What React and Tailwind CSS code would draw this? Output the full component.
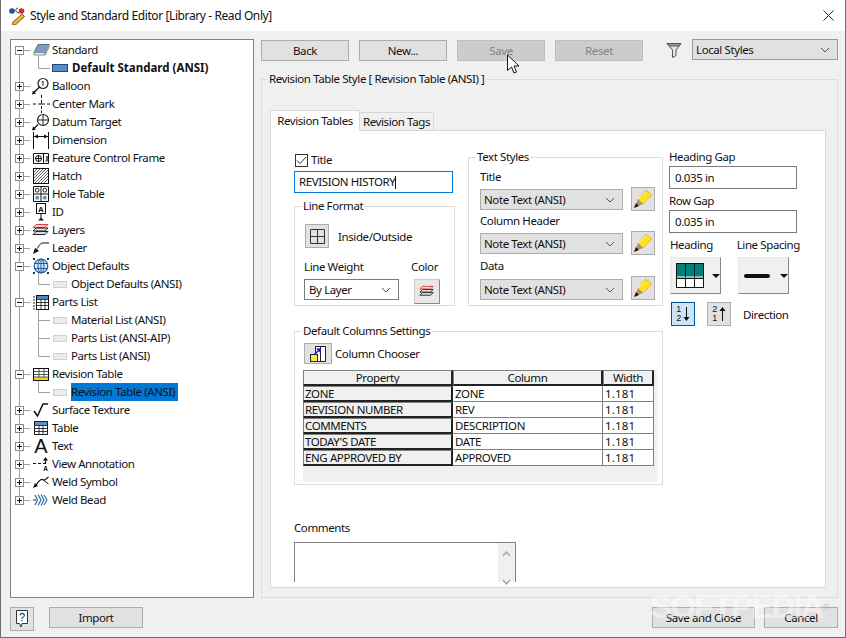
import React from 'react';

const Btn = ({ children, className = '' }) => (
  <div className={`flex items-center justify-center h-[21px] bg-[#e1e1e1] border border-[#adadad] ${className}`}>{children}</div>
);

const Chevron = () => (
  <svg width="10" height="6" viewBox="0 0 10 6" className="shrink-0"><path d="M1 1l4 4 4-4" fill="none" stroke="#555" /></svg>
);

const Select = ({ text, className = '' }) => (
  <div className={`flex items-center justify-between h-[21px] pl-[3px] pr-[7px] border ${className}`}>
    <span>{text}</span>
    <Chevron />
  </div>
);

const Pencil = () => (
  <svg width="20" height="20" viewBox="0 0 20 20">
    <path d="M12.500 1L19 6l-9 9-5-5z" fill="#ffe21f" stroke="#c9a514" strokeWidth="0.600" />
    <path d="M5 10l5 5-5 2-2-2z" fill="#b98f68" />
    <path d="M1 19l2-5 3 3z" fill="#111" />
    <path d="M5 10l7-7" stroke="#fff6a8" />
  </svg>
);

const LayersIcon = ({ w = 18 }) => (
  <svg width={w} height={w * 0.78} viewBox="0 0 18 14">
    <path d="M4 1.500h12l-3 3H1z" fill="#f6d0d0" stroke="#e03a3a" />
    <path d="M4 5h12l-3 3H1z" fill="#ddd" stroke="#222" />
    <path d="M4 8.500h12l-3 3H1z" fill="#ddd" stroke="#222" />
  </svg>
);

const icons = {
  standard: (
    <svg width="17" height="14" viewBox="0 0 17 14">
      <path d="M5 1.500h11l-4 8H1z" fill="#7d9dc0" stroke="#5e6f84" />
      <path d="M1 9.500h11v2.500H1z" fill="#eef1f5" stroke="#7d8a9a" />
      <path d="M12 9.500l4-8v2.500l-4 8z" fill="#cfd6de" stroke="#7d8a9a" />
    </svg>
  ),
  balloon: (
    <svg width="18" height="18" viewBox="0 0 18 18">
      <circle cx="11" cy="6.500" r="5" fill="#fff" stroke="#222" strokeWidth="1.200" />
      <path d="M11 4v5M9.800 5l1.200-1" stroke="#222" />
      <path d="M7.500 10L2 15.500" stroke="#111" strokeWidth="1.300" />
      <path d="M0 17.500l1-4 3 3z" fill="#111" />
    </svg>
  ),
  center: (
    <svg width="17" height="18" viewBox="0 0 17 18">
      <path d="M8.500 0v3M8.500 5v3.500M8.500 11v3M8.500 15.500v2.500" stroke="#111" />
      <path d="M0 9h3M5 9h7M14 9h3" stroke="#111" />
    </svg>
  ),
  datum: (
    <svg width="18" height="18" viewBox="0 0 18 18">
      <circle cx="11" cy="7" r="5.500" fill="#fff" stroke="#222" strokeWidth="1.200" />
      <path d="M5.500 7h11M11 1.500v11" stroke="#222" />
      <path d="M6 11.500L2 15.500" stroke="#111" strokeWidth="1.300" />
      <path d="M0 17.500l1-4 3 3z" fill="#111" />
    </svg>
  ),
  dimension: (
    <svg width="16" height="17" viewBox="0 0 16 17">
      <path d="M.5 0v17M15.500 0v17" stroke="#111" />
      <path d="M1 4.500h14" stroke="#111" />
      <path d="M1 4.500l4-2v4zM15 4.500l-4-2v4z" fill="#111" />
    </svg>
  ),
  fcf: (
    <svg width="16" height="11" viewBox="0 0 16 11">
      <path d="M.5.500h15v10H.5zM10.500.500v10" fill="#fff" stroke="#111" />
      <circle cx="5.500" cy="5.500" r="3" fill="none" stroke="#111" />
      <path d="M2 5.500h7M5.500 2v7" stroke="#111" />
      <path d="M12 8h1" stroke="#4a6d90" /><path d="M14 3v5.500" stroke="#111" strokeWidth="1.300" />
    </svg>
  ),
  hatch: (
    <svg width="16" height="16" viewBox="0 0 16 16">
      <rect x=".5" y=".5" width="15" height="15" fill="#fff" stroke="#111" />
      <path d="M1 4l3-3M1 7l6-6M1 10l9-9M1 13l12-12M2 15L15 2M5 15L15 5M8 15l7-7M11 15l4-4" stroke="#333" strokeWidth="0.800" />
    </svg>
  ),
  hole: (
    <svg width="16" height="16" viewBox="0 0 16 16">
      <path d="M.5.500h15v15H.5zM8 .500v15M.5 8h15" fill="#fff" stroke="#111" />
      <circle cx="4.200" cy="4.200" r="1.900" fill="none" stroke="#222" />
      <circle cx="11.800" cy="4.200" r="1.900" fill="none" stroke="#222" />
      <circle cx="4.200" cy="11.800" r="2" fill="#6d8fb3" />
      <circle cx="11.800" cy="11.800" r="2" fill="#6d8fb3" />
    </svg>
  ),
  id: (
    <svg width="12" height="18" viewBox="0 0 12 18">
      <rect x="1.500" y=".5" width="9" height="10" fill="#fff" stroke="#111" />
      <text x="6" y="8.500" textAnchor="middle" fontSize="8" fontWeight="700" fontFamily="Liberation Sans" letterSpacing="0" fill="#111">A</text>
      <path d="M6 11v4" stroke="#111" /><path d="M3 17.500l3-3 3 3z" fill="#111" />
    </svg>
  ),
  layers: <LayersIcon />,
  leader: (
    <svg width="16" height="12" viewBox="0 0 16 12">
      <path d="M16 1H10C7 1 6 4 3 8" fill="none" stroke="#111" />
      <path d="M0 12l2-6 4 3z" fill="#111" />
    </svg>
  ),
  globe: (
    <svg width="16" height="16" viewBox="0 0 16 16">
      <circle cx="8" cy="8" r="6.800" fill="#dbe7f4" stroke="#1f5c9f" strokeWidth="1.200" />
      <ellipse cx="8" cy="8" rx="3" ry="6.800" fill="none" stroke="#1f5c9f" />
      <path d="M1.500 5.500h13M1.500 10.500h13M8 1v14" stroke="#1f5c9f" />
      <path d="M0 0h2v2H0zM14 0h2v2h-2zM0 14h2v2H0zM14 14h2v2h-2z" fill="#12395f" />
    </svg>
  ),
  parts: (
    <svg width="16" height="15" viewBox="0 0 16 15">
      <path d="M0 2h2M0 5h2M0 8h2M0 11h2M0 14h2" stroke="#222" />
      <rect x="3.500" y=".5" width="12" height="14" fill="#fff" stroke="#111" />
      <rect x="4" y="1" width="11" height="3" fill="#4f87c2" />
      <path d="M4 4.500h11M4 7.500h11M4 10.500h11M8 4v10M12 4v10" stroke="#111" strokeWidth="0.800" />
    </svg>
  ),
  revision: (
    <svg width="16" height="13" viewBox="0 0 16 13">
      <rect x=".5" y=".5" width="15" height="12" fill="#fff" stroke="#111" />
      <rect x="1" y="9" width="14" height="3" fill="#f4d61e" />
      <path d="M1 3.500h14M1 6.500h14M1 9h14M6 1v8M11 1v8" stroke="#333" strokeWidth="0.800" />
    </svg>
  ),
  surface: (
    <svg width="16" height="14" viewBox="0 0 16 14">
      <path d="M1 8l3.500 5L10 1h5" fill="none" stroke="#111" strokeWidth="1.500" />
    </svg>
  ),
  table: (
    <svg width="14" height="14" viewBox="0 0 14 14">
      <rect x=".5" y=".5" width="13" height="13" fill="#fff" stroke="#222" />
      <rect x="1" y="1" width="12" height="3" fill="#5a8fc7" />
      <path d="M1 4.500h12M1 7.500h12M1 10.500h12M5 4v10M9 4v10" stroke="#222" strokeWidth="0.900" />
    </svg>
  ),
  text: <span className="text-[20px] leading-[18px] tracking-normal font-['Liberation_Sans',sans-serif]">A</span>,
  view: (
    <svg width="16" height="14" viewBox="0 0 16 14">
      <path d="M0 6.500h3M5 6.500h3M10 6.500h3" stroke="#111" />
      <path d="M12.500 6V3" stroke="#111" strokeWidth="1.300" /><path d="M10 3.500L12.500 0 15 3.500z" fill="#111" />
      <text x="12.500" y="14" textAnchor="middle" fontSize="6.500" fontWeight="700" fontFamily="Liberation Sans" letterSpacing="0" fill="#111">A</text>
    </svg>
  ),
  weld: (
    <svg width="16" height="12" viewBox="0 0 16 12">
      <path d="M3 9C6 4 9 2 11 4.500L15.500 1" fill="none" stroke="#111" strokeWidth="1.100" />
      <path d="M11 4.500L15.500 8" stroke="#111" />
      <path d="M0 12l2-5 3 3z" fill="#111" />
    </svg>
  ),
  bead: (
    <svg width="16" height="12" viewBox="0 0 16 12">
      <path d="M0 6h3" stroke="#222" />
      <path d="M2 1l2.500 5L2 11M5 .5L8 6l-3 5.500M8 .5L11 6l-3 5.500M11 1l3 5-3 5" fill="none" stroke="#2f6aa8" strokeWidth="1.200" />
    </svg>
  ),
};

// tree connector lines + the expander box, drawn per row
const Connector = ({ kind, first, last, open, more }) => (
  <svg width="41" height="18" viewBox="0 0 41 18" className="shrink-0">
    <path d={`M8.500 ${first ? 9 : 0}V${last ? 9 : 18}`} stroke="#a0a0a0" />
    {kind === 'parent' && <path d="M8.500 9.500H19" stroke="#a0a0a0" />}
    {kind === 'parent' && (
      <>
        <rect x="4.500" y="5.500" width="8" height="8" fill="#fff" stroke="#8a8a8a" />
        <path d="M6 9.500h5" stroke="#111" />
        {!open && <path d="M8.500 7v5" stroke="#111" />}
      </>
    )}
    {kind === 'child' && <path d={`M27.500 0V${more ? 18 : 9.500}M27.500 9.500H39`} stroke="#a0a0a0" />}
    {open && <path d="M27.500 15V18" stroke="#a0a0a0" />}
  </svg>
);

const tree = [
  { label: 'Standard', icon: 'standard', open: true },
  { label: 'Default Standard (ANSI)', child: 'blue' },
  { label: 'Balloon', icon: 'balloon' },
  { label: 'Center Mark', icon: 'center' },
  { label: 'Datum Target', icon: 'datum' },
  { label: 'Dimension', icon: 'dimension' },
  { label: 'Feature Control Frame', icon: 'fcf' },
  { label: 'Hatch', icon: 'hatch' },
  { label: 'Hole Table', icon: 'hole' },
  { label: 'ID', icon: 'id' },
  { label: 'Layers', icon: 'layers' },
  { label: 'Leader', icon: 'leader' },
  { label: 'Object Defaults', icon: 'globe', open: true },
  { label: 'Object Defaults (ANSI)', child: 'gray' },
  { label: 'Parts List', icon: 'parts', open: true },
  { label: 'Material List (ANSI)', child: 'gray', more: true },
  { label: 'Parts List (ANSI-AIP)', child: 'gray', more: true },
  { label: 'Parts List (ANSI)', child: 'gray' },
  { label: 'Revision Table', icon: 'revision', open: true },
  { label: 'Revision Table (ANSI)', child: 'gray', selected: true },
  { label: 'Surface Texture', icon: 'surface' },
  { label: 'Table', icon: 'table' },
  { label: 'Text', icon: 'text' },
  { label: 'View Annotation', icon: 'view' },
  { label: 'Weld Symbol', icon: 'weld' },
  { label: 'Weld Bead', icon: 'bead' },
];

const TreeRow = ({ row, index }) => {
  if (row.child) {
    return (
      <div className="flex items-center h-[18px]">
        <Connector kind="child" more={row.more} />
        {row.child === 'blue' ? (
          <div className="w-[16px] h-[8px] bg-[#4f8fd0] border border-[#24486e] shrink-0" />
        ) : (
          <div className="w-[14px] h-[7px] bg-[#ececec] border border-[#d0d0d0] shrink-0 ml-px" />
        )}
        <span className={`whitespace-nowrap h-[18px] leading-[18px] ${row.child === 'blue' ? 'ml-[4px] font-bold tracking-[0px]' : 'ml-[4px]'} ${row.selected ? 'bg-[#0078d7] pr-[3px]' : ''}`}>{row.label}</span>
      </div>
    );
  }
  return (
    <div className="flex items-center h-[18px]">
      <Connector kind="parent" open={row.open} first={index === 0} last={index === tree.length - 1} />
      <div className="flex items-center justify-center w-[18px] h-[18px] shrink-0 -ml-[20px]">{icons[row.icon]}</div>
      <span className="ml-[2px] whitespace-nowrap leading-[18px]">{row.label}</span>
    </div>
  );
};

const Group = ({ title, className = '', children }) => (
  <fieldset className={`border border-[#dcdcdc] ${className}`}>
    <legend className="ml-[7px] px-px h-[16px] leading-[16px]">{title}</legend>
    {children}
  </fieldset>
);

const columns = [
  ['ZONE', 'ZONE'],
  ['REVISION NUMBER', 'REV'],
  ['COMMENTS', 'DESCRIPTION'],
  ["TODAY'S DATE", 'DATE'],
  ['ENG APPROVED BY', 'APPROVED'],
];

const headCell = 'h-[16px] leading-[14px] bg-[#f0f0f0] border-t border-l border-[#808080] border-r-2 border-b-2 border-r-[#222] border-b-[#222]';
const dataCell = 'h-[16px] leading-[16px] px-[2px] bg-white border-r border-b border-[#808080]';

const NoteRow = ({ offset }) => (
  <div className="flex items-start h-[24px]">
    <Select text="Note Text (ANSI)" className={`w-[143px] bg-[#e1e1e1] border-[#adadad] ${offset}`} />
    <div className="ml-[8px] w-[24px] h-[24px] flex items-center justify-center bg-[#e1e1e1] border border-[#adadad]"><Pencil /></div>
  </div>
);

export default function App() {
  return (
    <div className="relative w-[846px] h-[638px] flex flex-col overflow-hidden bg-[#f0f0f0] border-x border-b border-[#6e6e6e] text-[11.5px] tracking-[-0.4px] text-[#111] font-['Noto_Sans',sans-serif]">
      {/* title bar */}
      <div className="flex items-center h-[31px] shrink-0 bg-white pl-[8px] pr-[11px]">
        <svg width="18" height="18" viewBox="0 0 18 18">
          <circle cx="3" cy="4" r="2.800" fill="#1d4f9c" />
          <circle cx="12.500" cy="4" r="2.800" fill="#e0262e" />
          <path d="M9 1C5 2 7 6 10 6" fill="none" stroke="#333" />
          <path d="M4 15l9-8 2.500 2.500-8.500 8-4 1z" fill="#f0b22a" stroke="#5b3f10" strokeWidth="0.800" />
        </svg>
        <span className="ml-[3px] text-[12px]">Style and Standard Editor [Library - Read Only]</span>
        <svg width="11" height="11" viewBox="0 0 11 11" className="ml-auto"><path d="M.5.500l10 10M10.500.500l-10 10" stroke="#222" /></svg>
      </div>

      <div className="flex pl-[9px] shrink-0">
        {/* style tree */}
        <div className="w-[244px] h-[559px] mt-[8px] pt-px bg-white border border-[#828282]">
          {tree.map((row, i) => <TreeRow key={row.label + i} row={row} index={i} />)}
        </div>

        <div className="ml-[7px] w-[577px]">
          <div className="flex items-start mt-[8px] h-[22px]">
            <Btn className="w-[88px] mt-px">Back</Btn>
            <Btn className="w-[88px] mt-px ml-[10px]">New...</Btn>
            <Btn className="w-[88px] mt-px ml-[10px] !bg-[#cccccc] !border-[#bfbfbf] text-[#838383]">Save</Btn>
            <Btn className="w-[88px] mt-px ml-[10px] !bg-[#cccccc] !border-[#bfbfbf] text-[#838383]">Reset</Btn>
            <svg width="16" height="17" viewBox="0 0 16 17" className="ml-[23px] mt-[3px]">
              <path d="M1 1.500h14L10 8v5.500L6.500 15.500V8z" fill="#e8e8e8" stroke="#555" />
              <path d="M1 1.500h14l-2 2.500H3z" fill="#9a9a9a" stroke="#555" />
            </svg>
            <Select text="Local Styles" className="w-[146px] ml-[10px] bg-[#e1e1e1] border-[#999]" />
          </div>

          <fieldset className="mt-[10px] h-[527px] pl-[8px] pr-[11px] border border-[#dcdcdc]">
            <legend className="-ml-[2px] px-px h-[16px] leading-[16px]">Revision Table Style [ Revision Table (ANSI) ]</legend>
            <div className="flex items-end h-[20px] mt-[23px] relative z-10">
              <div className="w-[90px] h-[21px] -mb-px flex items-center justify-center bg-white border border-b-0 border-[#d9d9d9]">Revision Tables</div>
              <div className="w-[74px] h-[18px] flex items-center justify-center bg-[#f0f0f0] border border-b-0 border-l-0 border-[#d9d9d9]">Revision Tags</div>
            </div>

            <div className="h-[458px] pl-[23px] pt-[18px] bg-white border border-[#d9d9d9] overflow-hidden">
              <div className="flex items-start">
                <div className="w-[369px]">
                  <div className="flex items-start h-[157px]">
                    <div className="w-[161px]">
                      <div className="flex items-center h-[16px] mt-[3px]">
                        <div className="flex items-center justify-center w-[13px] h-[13px] ml-px border border-[#333] bg-white">
                          <svg width="11" height="9" viewBox="0 0 11 9"><path d="M1 4.500l3 3 6-6.500" fill="none" stroke="#333" /></svg>
                        </div>
                        <span className="ml-[3px]">Title</span>
                      </div>
                      <div className="flex items-center w-[159px] h-[22px] mt-[3px] px-[4px] border border-[#0078d7]">
                        <span>REVISION HISTORY</span><span className="w-px h-[13px] bg-[#111]" />
                      </div>
                      <Group title="Line Format" className="h-[108px] mt-[5px]">
                        <div className="flex items-center mt-[10px] ml-[10px]">
                          <div className="flex items-center justify-center w-[24px] h-[24px] bg-[#e1e1e1] border border-[#adadad]">
                            <svg width="15" height="15" viewBox="0 0 15 15"><path d="M.5.500h14v14H.5zM7.500.500v14M.5 7.500h14" fill="none" stroke="#333" /></svg>
                          </div>
                          <span className="ml-[9px] mt-[2px]">Inside/Outside</span>
                        </div>
                        <div className="flex justify-between h-[16px] mt-[10px] ml-[9px] mr-[16px]">
                          <span>Line Weight</span><span>Color</span>
                        </div>
                        <div className="flex items-start mt-[5px] ml-[9px]">
                          <Select text="By Layer" className="w-[95px] bg-white border-[#7a7a7a] pl-[4px]" />
                          <div className="flex items-center justify-center ml-[15px] w-[26px] h-[25px] bg-[#e8e8e8] border border-[#ccc] border-r-[#888] border-b-[#888]"><LayersIcon w={16} /></div>
                        </div>
                      </Group>
                    </div>

                    <Group title="Text Styles" className="w-[195px] h-[157px] ml-[13px]">
                      <div className="pl-[11px] pt-[4px]">
                        <div className="h-[16px] leading-[16px]">Title</div>
                        <div className="mt-[2px]"><NoteRow offset="mt-[2px]" /></div>
                        <div className="h-[16px] leading-[16px] mt-[2px]">Column Header</div>
                        <div className="mt-[2px]"><NoteRow offset="mt-[2px]" /></div>
                        <div className="h-[16px] leading-[16px] mt-[3px]">Data</div>
                        <div className="mt-[2px]"><NoteRow offset="mt-[3px]" /></div>
                      </div>
                    </Group>
                  </div>

                  <Group title="Default Columns Settings" className="w-[369px] h-[162px] mt-[17px]">
                    <div className="flex items-center mt-[4px] ml-[9px]">
                      <div className="flex items-center justify-center w-[28px] h-[21px] bg-[#e1e1e1] border border-[#adadad]">
                        <svg width="16" height="16" viewBox="0 0 16 16">
                          <path d="M5.500.500h10v15h-10zM10.500.500v15" fill="#fff" stroke="#222" />
                          <rect x=".5" y="8.500" width="7" height="7" fill="#ffe93a" stroke="#222" />
                          <path d="M4 9l6-6" stroke="#1414d0" strokeWidth="1.400" /><path d="M6 2.500h5v5z" fill="#1414d0" />
                        </svg>
                      </div>
                      <span className="ml-[3px]">Column Chooser</span>
                    </div>
                    <div className="w-[354px] h-[112px] mt-[6px] ml-[8px] bg-[#f0f0f0]">
                      <div className="grid grid-cols-[150px_150px_51px] text-center">
                        <div className={headCell}>Property</div>
                        <div className={headCell}>Column</div>
                        <div className={headCell}>Width</div>
                      </div>
                      {columns.map(([prop, col]) => (
                        <div key={prop} className="grid grid-cols-[150px_150px_51px] whitespace-nowrap">
                          <div className={`${headCell} pl-px`}>{prop}</div>
                          <div className={dataCell}>{col}</div>
                          <div className={`${dataCell} tracking-[0.2px]`}>1.181</div>
                        </div>
                      ))}
                    </div>
                  </Group>
                </div>

                {/* gaps, heading and direction */}
                <div className="ml-[6px] w-[131px]">
                  <div className="h-[16px] leading-[16px]">Heading Gap</div>
                  <div className="flex items-center w-[128px] h-[23px] mt-px pl-[5px] border border-[#7a7a7a]">0.035 in</div>
                  <div className="h-[16px] leading-[16px] mt-[4px]">Row Gap</div>
                  <div className="flex items-center w-[128px] h-[23px] mt-px pl-[5px] border border-[#7a7a7a]">0.035 in</div>
                  <div className="flex h-[16px] leading-[16px] mt-[4px] ml-px whitespace-nowrap"><span className="w-[70px]">Heading</span><span>Line Spacing</span></div>
                  <div className="flex mt-[4px] ml-px">
                    <div className="flex items-center w-[51px] h-[37px] pl-[5px] bg-[#f0f0f0] border border-[#e6e6e6] border-r-[#888] border-b-[#888]">
                      <svg width="28" height="25" viewBox="0 0 28 25">
                        <rect x=".5" y=".5" width="27" height="24" fill="#fff" stroke="#111" />
                        <rect x="1" y="1" width="26" height="12" fill="#00807c" />
                        <path d="M9.500 1v23M18.500 1v23M1 15.500h26" stroke="#111" /><path d="M1 14h26" stroke="#00807c" />
                      </svg>
                      <svg width="8" height="4" viewBox="0 0 8 4" className="ml-[8px]"><path d="M0 0h8L4 4z" fill="#111" /></svg>
                    </div>
                    <div className="flex items-center w-[51px] h-[37px] ml-[17px] pl-[5px] bg-[#f0f0f0] border border-[#e6e6e6] border-r-[#888] border-b-[#888]">
                      <div className="w-[26px] h-[4px] rounded-full bg-[#111]" />
                      <svg width="8" height="4" viewBox="0 0 8 4" className="ml-[10px]"><path d="M0 0h8L4 4z" fill="#111" /></svg>
                    </div>
                  </div>
                  <div className="flex items-center mt-[8px] ml-[2px]">
                    <div className="flex items-center justify-center gap-[2px] w-[24px] h-[24px] bg-[#cce4f7] border border-[#005499]">
                      <div className="flex flex-col text-[9px] leading-[9px] font-['Liberation_Sans',sans-serif]"><span>1</span><span>2</span></div>
                      <svg width="7" height="14" viewBox="0 0 7 14"><path d="M3.500 0v11" stroke="#111" /><path d="M.5 10h6l-3 4z" fill="#111" /></svg>
                    </div>
                    <div className="flex items-center justify-center gap-[2px] w-[24px] h-[24px] ml-[12px] bg-[#e1e1e1] border border-[#adadad]">
                      <div className="flex flex-col text-[9px] leading-[9px] font-['Liberation_Sans',sans-serif]"><span>2</span><span>1</span></div>
                      <svg width="7" height="14" viewBox="0 0 7 14"><path d="M3.500 3v11" stroke="#111" /><path d="M.5 4h6l-3-4z" fill="#111" /></svg>
                    </div>
                    <span className="ml-[12px] mt-[2px]">Direction</span>
                  </div>
                </div>
              </div>

              <div className="h-[16px] leading-[16px] mt-[35px]">Comments</div>
              <div className="flex justify-end w-[222px] h-[40px] mt-[6px] border-t border-x border-[#828282] bg-white">
                <div className="flex flex-col items-center justify-between w-[17px] h-full pt-[8px] bg-[#f0f0f0]">
                  <svg width="9" height="6" viewBox="0 0 9 6"><path d="M1 5l3.500-4L8 5" fill="none" stroke="#a0a0a0" strokeWidth="1.300" /></svg>
                  <svg width="9" height="6" viewBox="0 0 9 6" className="-mb-[3px]"><path d="M1 1l3.500 4L8 1" fill="none" stroke="#a0a0a0" strokeWidth="1.300" /></svg>
                </div>
              </div>
            </div>
          </fieldset>
        </div>
      </div>

      {/* footer */}
      <div className="flex items-start mt-[9px] pl-[9px] pr-[7px]">
        <div className="flex items-center justify-center w-[24px] h-[24px] bg-[#e1e1e1] border border-[#adadad]">
          <svg width="14" height="20" viewBox="0 0 14 20">
            <path d="M1.500 1.500h11v13H7l-1 3.500-1.500-3.500h-3z" fill="#fff" stroke="#333" />
            <text x="7" y="12" textAnchor="middle" fontSize="11" fontFamily="Liberation Sans" letterSpacing="0" fill="#111">?</text>
          </svg>
        </div>
        <Btn className="w-[94px] ml-[15px]">Import</Btn>
        <Btn className="w-[103px] ml-auto">Save and Close</Btn>
        <Btn className="w-[74px] ml-[9px]">Cancel</Btn>
      </div>

      {/* mouse cursor over the Save button */}
      <svg width="14" height="21" viewBox="0 0 14 21" className="absolute left-[505px] top-[54px]">
        <path d="M1.500 1v15.500l4-3.500 2.500 6 2.500-1-2.500-6h5z" fill="#fff" stroke="#111" />
      </svg>

      {/* watermark */}
      <div className="absolute left-[649px] top-[589px] text-[33px] leading-[36px] font-bold tracking-[-1.800px] text-white/45 font-['Liberation_Sans',sans-serif]">SOFTPEDIA<span className="text-[9px] align-top tracking-normal text-[#aaa]/50">®</span></div>
    </div>
  );
}
